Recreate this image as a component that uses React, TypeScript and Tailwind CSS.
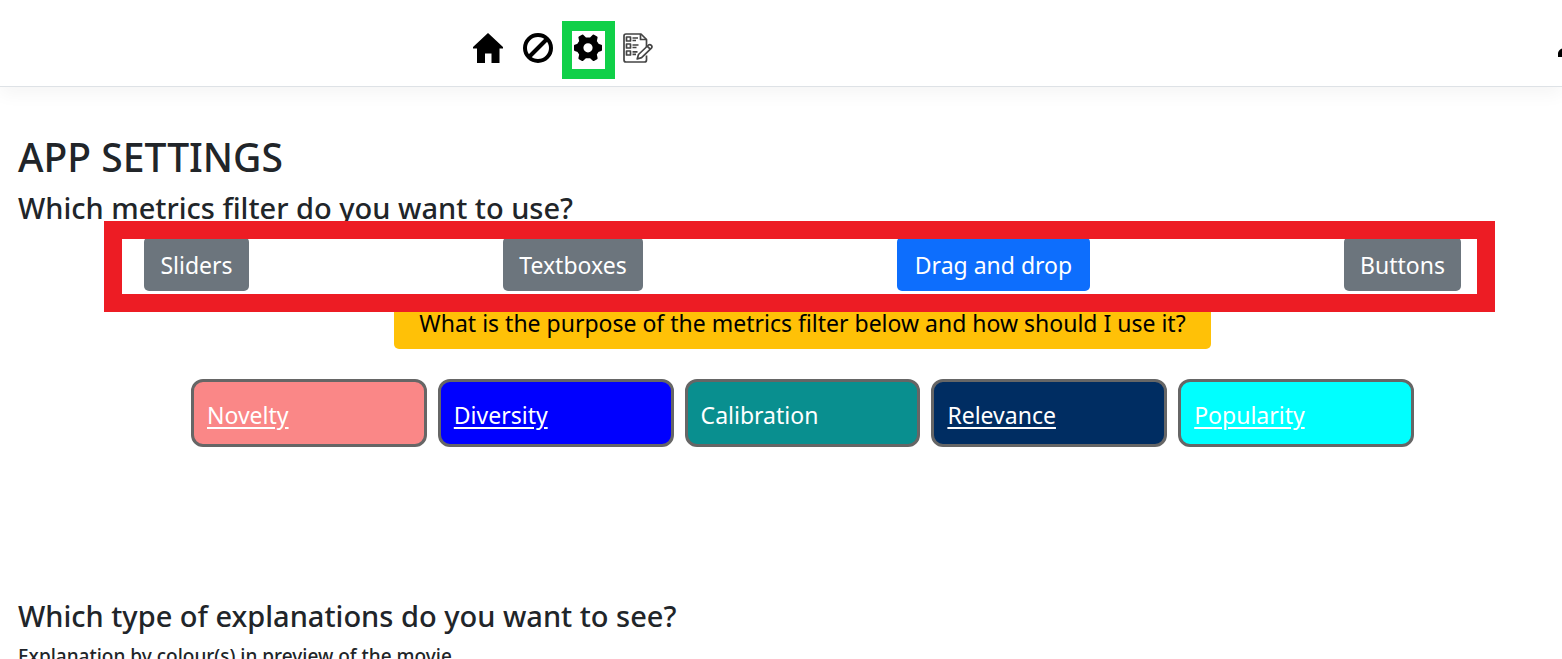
import React from "react";

function HomeIcon() {
  return (
    <svg viewBox="0 0 30 30" className="size-[30px]" aria-hidden="true">
      <path d="M15 0 L30 14 V15.5 H26.5 V30 H18.5 V20.5 H12 V30 H4 V15.5 H0 V14 Z" fill="#000" />
    </svg>
  );
}

function BanIcon() {
  return (
    <svg viewBox="0 0 30 30" className="size-[30px]" fill="none" stroke="#000" strokeWidth="4" aria-hidden="true">
      <circle cx="15" cy="15" r="13" />
      <path d="M6 24 L24 6" />
    </svg>
  );
}

function GearIcon() {
  return (
    <svg viewBox="0 0 30 30" className="size-[30px]" aria-hidden="true">
      <path
        fillRule="evenodd"
        strokeLinejoin="round"
        stroke="#000"
        strokeWidth="2"
        d="M9.5 2.5 L12.5 5.5 H17.5 L20.5 2.5 L23.6 4.3 L22.8 8.4 L25 11.6 L28 12.6 V17 L25 18 L22.8 21.2 L23.6 25.3 L20.5 27 L17.5 24.2 H12.5 L9.5 27 L6.4 25.3 L7.2 21.2 L5 18 L2 17 V12.6 L5 11.6 L7.2 8.4 L6.4 4.3 Z M15 9.2 A5.6 5.6 0 1 0 15 20.4 A5.6 5.6 0 1 0 15 9.2 Z"
      />
    </svg>
  );
}

function SurveyIcon() {
  return (
    <svg viewBox="0 0 30 30" className="size-[30px]" fill="none" stroke="#444" strokeWidth="1.7" strokeLinejoin="round" aria-hidden="true">
      <path d="M23.5 14 V6.5 L18 1 H3 Q1 1 1 3 V27 Q1 29 3 29 H21.5 Q23.5 29 23.5 27 V22.5" />
      <path d="M17.5 1 V6.5 H23.5" />
      <path d="M3.5 4 H7.5 V8 H3.5 Z M3.5 11 H7.5 V15 H3.5 Z M3.5 18 H7.5 V22 H3.5 Z" />
      <path d="M9.5 5 H15 M9.5 7.5 H13 M9.5 12 H15.5 M9.5 14.5 H13.5 M9.5 18.8 H14.5 M9.5 21.3 H13" />
      <path d="M14.2 26 L15.5 21.5 L25.5 12 Q27 11 28.3 12.3 Q29.6 13.8 28.4 15.1 L18.6 24.6 Z M24.2 13.2 L27.2 16.2" fill="#fff" />
    </svg>
  );
}

function UserIcon() {
  return (
    <svg viewBox="0 0 30 30" className="size-[30px]" fill="#000" aria-hidden="true">
      <circle cx="15" cy="7" r="7" />
      <path d="M0 24 V20 Q1 15 7 15 H23 Q29 15 30 20 V24 Z" />
    </svg>
  );
}

const filters = [
  { name: "Sliders", look: "bg-[#6c757d] w-[105px]" },
  { name: "Textboxes", look: "bg-[#6c757d] w-[140px]" },
  { name: "Drag and drop", look: "bg-[#0d6efd] w-[193px]" },
  { name: "Buttons", look: "bg-[#6c757d] w-[117px]" },
];

const metrics = [
  { name: "Novelty", look: "bg-[#fa8787]", link: true },
  { name: "Diversity", look: "bg-[#0000ff]", link: true },
  { name: "Calibration", look: "bg-[#098f8f]", link: false },
  { name: "Relevance", look: "bg-[#002d62]", link: true },
  { name: "Popularity", look: "bg-[#00ffff]", link: true },
];

export default function App() {
  return (
    <div className="h-screen overflow-hidden bg-white font-['Noto_Sans','Open_Sans',sans-serif] text-[#212529]">
      <header className="flex h-[87px] items-start justify-between border-b border-[#dee2e6] pt-[33px] pl-[473px] shadow-[0_8px_16px_rgba(0,0,0,0.04)]">
        <nav className="flex gap-5">
          <a href="#home" aria-label="Home"><HomeIcon /></a>
          <a href="#blocked" aria-label="Blocked"><BanIcon /></a>
          <a href="#settings" aria-label="Settings" className="relative">
            <GearIcon />
            <span className="pointer-events-none absolute -top-3 -right-3 -bottom-4 left-[-11px] border-10 border-[#10d048]" />
          </a>
          <a href="#survey" aria-label="Survey"><SurveyIcon /></a>
        </nav>
        <a href="#account" aria-label="Account" className="-mr-[26px] shrink-0"><UserIcon /></a>
      </header>

      <main className="px-[18px] pt-[46px]">
        <h1 className="text-[39px] leading-12 font-medium">APP SETTINGS</h1>
        <h2 className="mt-[9px] text-[29px] leading-9 font-medium">Which metrics filter do you want to use?</h2>

        <section className="mt-[11px] mr-[83px] ml-[126px]">
          <div className="relative flex justify-between">
            {filters.map((f) => (
              <button key={f.name} type="button" className={`h-[54px] rounded-[5px] pt-[3px] text-center text-[23px] whitespace-nowrap text-white ${f.look}`}>
                {f.name}
              </button>
            ))}
            <span className="pointer-events-none absolute -top-4 -right-[34px] -bottom-[21px] -left-10 z-10 border-18 border-[#ed1c24]" />
          </div>
          <button type="button" className="mx-auto mt-1 block h-[54px] w-[817px] rounded-[5px] bg-[#ffc107] pt-[3px] text-[23px] whitespace-nowrap text-black">
            What is the purpose of the metrics filter below and how should I use it?
          </button>
          <ul className="mx-[47px] mt-[30px] grid grid-cols-5 gap-[11px]">
            {metrics.map((m) => (
              <li key={m.name} className={`flex h-[68px] items-center rounded-xl border-3 border-[#666] px-[13px] pt-1 text-[23px] text-white ${m.look}`}>
                {m.link ? <a href={`#${m.name}`} className="underline decoration-2 underline-offset-3">{m.name}</a> : m.name}
              </li>
            ))}
          </ul>
        </section>

        <h2 className="mt-[151px] text-[29px] leading-9 font-medium">Which type of explanations do you want to see?</h2>
        <h3 className="mt-[10px] text-[19px] leading-6 font-medium">Explanation by colour(s) in preview of the movie</h3>
      </main>
    </div>
  );
}
